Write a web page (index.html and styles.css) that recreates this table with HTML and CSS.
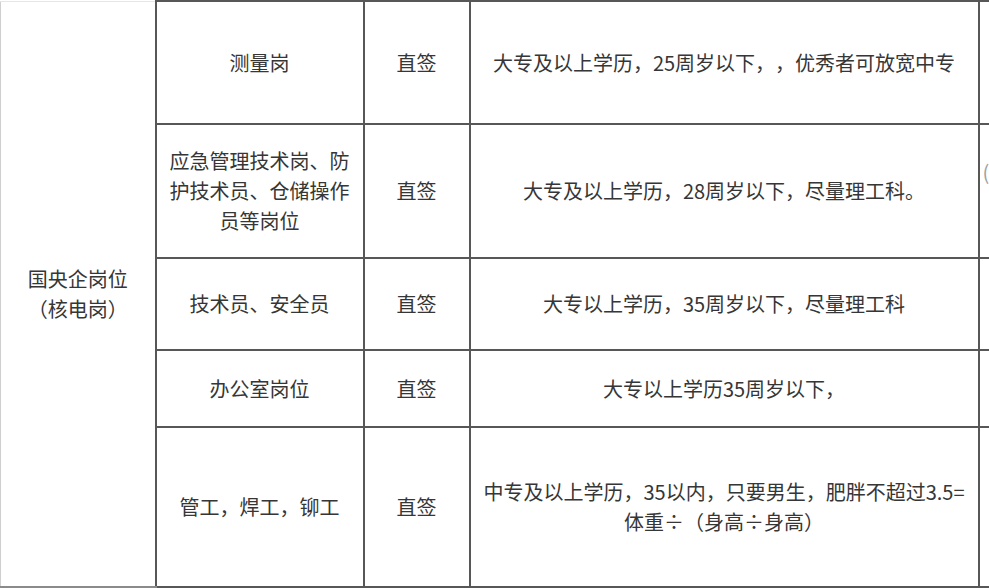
FILE: index.html
```html
<!DOCTYPE html>
<html lang="zh-CN">
<head>
<meta charset="utf-8">
<title>岗位表</title>
<link rel="stylesheet" href="styles.css">
</head>
<body>
<table class="jobs">
  <colgroup>
    <col class="c-cat">
    <col class="c-post">
    <col class="c-sign">
    <col class="c-req">
    <col class="c-more">
  </colgroup>
  <tbody>
    <tr class="r1">
      <td class="cat" rowspan="5">国央企岗位<br>（核电岗）</td>
      <td>测量岗</td>
      <td>直签</td>
      <td>大专及以上学历，25周岁以下，，优秀者可放宽中专</td>
      <td class="more"></td>
    </tr>
    <tr class="r2">
      <td>应急管理技术岗、防<br>护技术员、仓储操作<br>员等岗位</td>
      <td>直签</td>
      <td>大专及以上学历，28周岁以下，尽量理工科。</td>
      <td class="more peek-cell"><span class="peek">(</span></td>
    </tr>
    <tr class="r3">
      <td>技术员、安全员</td>
      <td>直签</td>
      <td>大专以上学历，35周岁以下，尽量理工科</td>
      <td class="more"></td>
    </tr>
    <tr class="r4">
      <td>办公室岗位</td>
      <td>直签</td>
      <td>大专以上学历35周岁以下，</td>
      <td class="more"></td>
    </tr>
    <tr class="r5">
      <td>管工，焊工，铆工</td>
      <td>直签</td>
      <td>中专及以上学历，35以内，只要男生，肥胖不超过3.5=<br>体重÷（身高÷身高）</td>
      <td class="more"></td>
    </tr>
  </tbody>
</table>
</body>
</html>
```

FILE: styles.css
```css
html, body {
  margin: 0;
  padding: 0;
  background: #ffffff;
  overflow: hidden;
  width: 989px;
  height: 588px;
}

.jobs {
  border-collapse: collapse;
  table-layout: fixed;
  width: 1178px;
  font-family: "Noto Sans CJK SC", "Noto Sans", sans-serif;
  font-size: 20px;
  line-height: 30px;
  color: #363636;
  text-spacing-trim: space-all;
}

.c-cat { width: 155px; }
.c-post { width: 208px; }
.c-sign { width: 106px; }
.c-req { width: 509px; }
.c-more { width: 200px; }

.jobs td {
  border: 2px solid #575757;
  padding: 0;
  text-align: center;
  vertical-align: middle;
  white-space: nowrap;
}

.jobs td.cat {
  border-left: 1px solid #cfcfcf;
  border-top: 1px solid #e6e6e6;
  border-bottom-color: #8a8a8a;
}

.jobs td.more {
  text-align: left;
  border-right: none;
}

.jobs td.peek-cell {
  vertical-align: top;
  padding-top: 32px;
}

.peek {
  color: #a0a0a0;
  padding-left: 3px;
}

.r1 { height: 123px; }
.r2 { height: 134px; }
.r3 { height: 92px; }
.r4 { height: 77px; }
.r5 { height: 160px; }
```
